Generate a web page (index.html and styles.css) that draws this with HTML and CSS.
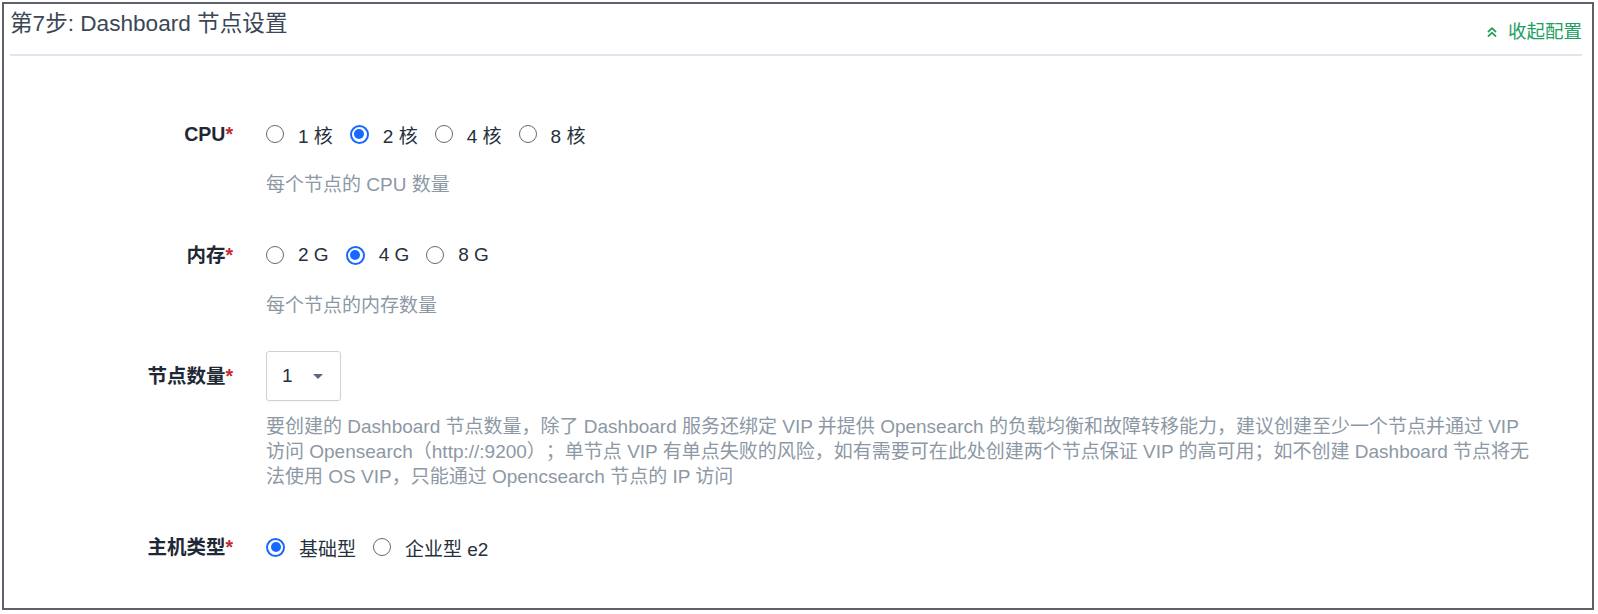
FILE: index.html
```html
<!DOCTYPE html>
<html lang="zh-CN">
<head>
<meta charset="utf-8">
<title>Dashboard 节点设置</title>
<link rel="stylesheet" href="styles.css">
</head>
<body>
<div class="panel">
  <div class="panel-header">
    <div class="panel-title">第7步: Dashboard 节点设置</div>
    <a class="collapse">
      <svg class="collapse-icon" width="12" height="12" viewBox="0 0 12 12"><path d="M2 6 L6 2.2 L10 6 M2 10.5 L6 6.7 L10 10.5" fill="none" stroke="currentColor" stroke-width="1.8"/></svg>
      <span>收起配置</span>
    </a>
  </div>
  <div class="form">
    <div class="form-item">
      <div class="form-label">CPU<span class="req">*</span></div>
      <div class="form-control">
        <div class="control-row">
          <label class="radio"><span class="radio-dot"></span><span>1 核</span></label>
          <label class="radio checked"><span class="radio-dot"></span><span>2 核</span></label>
          <label class="radio"><span class="radio-dot"></span><span>4 核</span></label>
          <label class="radio"><span class="radio-dot"></span><span>8 核</span></label>
        </div>
        <div class="help">每个节点的 CPU 数量</div>
      </div>
    </div>
    <div class="form-item">
      <div class="form-label">内存<span class="req">*</span></div>
      <div class="form-control">
        <div class="control-row">
          <label class="radio"><span class="radio-dot"></span><span>2 G</span></label>
          <label class="radio checked"><span class="radio-dot"></span><span>4 G</span></label>
          <label class="radio"><span class="radio-dot"></span><span>8 G</span></label>
        </div>
        <div class="help">每个节点的内存数量</div>
      </div>
    </div>
    <div class="form-item">
      <div class="form-label">节点数量<span class="req">*</span></div>
      <div class="form-control">
        <div class="control-row">
          <div class="select"><span class="select-value">1</span><span class="caret"></span></div>
        </div>
        <div class="help">要创建的 Dashboard 节点数量，除了 Dashboard 服务还绑定 VIP 并提供 Opensearch 的负载均衡和故障转移能力，建议创建至少一个节点并通过 VIP<br>访问 Opensearch（http://:9200）；单节点 VIP 有单点失败的风险，如有需要可在此处创建两个节点保证 VIP 的高可用；如不创建 Dashboard 节点将无<br>法使用 OS VIP，只能通过 Opencsearch 节点的 IP 访问</div>
      </div>
    </div>
    <div class="form-item">
      <div class="form-label">主机类型<span class="req">*</span></div>
      <div class="form-control">
        <div class="control-row">
          <label class="radio checked"><span class="radio-dot"></span><span>基础型</span></label>
          <label class="radio"><span class="radio-dot"></span><span>企业型 e2</span></label>
        </div>
      </div>
    </div>
  </div>
</div>
</body>
</html>
```

FILE: styles.css
```css
* { box-sizing: border-box; }
body {
  margin: 0;
  background: #fff;
  font-family: "Liberation Sans", "Noto Sans CJK SC", sans-serif;
  text-spacing-trim: space-all;
}
.panel {
  margin: 2px;
  width: 1592px;
  height: 608px;
  border: 2px solid #5d6169;
  background: #fff;
}
.panel-header {
  display: flex;
  justify-content: space-between;
  align-items: flex-start;
  margin: 0 10px 0 6px;
  height: 52px;
  border-bottom: 2px solid #e0e6ed;
}
.panel-title {
  font-size: 22.6px;
  line-height: 40px;
  color: #3b4756;
}
.collapse {
  display: flex;
  align-items: center;
  gap: 10px;
  margin-top: 8px;
  font-size: 18.5px;
  line-height: 40px;
  color: #22a062;
  height: 40px;
}
.collapse-icon { display: block; }
.form {
  padding-top: 53px;
}
.form-item {
  display: flex;
  margin-bottom: 33px;
}
.form-label {
  width: 229px;
  flex: none;
  text-align: right;
  font-size: 19.5px;
  font-weight: 700;
  line-height: 50px;
  color: #1f2935;
}
.req {
  color: #c5282c;
}
.form-control {
  margin-left: 33px;
  flex: 1;
}
.control-row {
  display: flex;
  align-items: center;
  gap: 17px;
  height: 50px;
}
.radio {
  display: flex;
  align-items: center;
  gap: 14px;
  font-size: 19px;
  color: #26303c;
}
.radio-dot {
  width: 18px;
  height: 18px;
  border-radius: 50%;
  border: 1.5px solid #666a70;
  display: flex;
  align-items: center;
  justify-content: center;
  flex: none;
}
.radio.checked .radio-dot {
  width: 19px;
  height: 19px;
  border: 2px solid #1668ff;
}
.radio.checked .radio-dot::after {
  content: "";
  width: 10px;
  height: 10px;
  border-radius: 50%;
  background: #1668ff;
}
.select {
  width: 75px;
  height: 50px;
  border: 1.5px solid #c9d3de;
  border-radius: 3px;
  display: flex;
  align-items: center;
  padding-left: 15px;
  gap: 20px;
  box-shadow: 0 1px 2px rgba(0,0,0,0.04);
}
.select-value {
  font-size: 19px;
  color: #26303c;
}
.caret {
  width: 0;
  height: 0;
  border-left: 5.5px solid transparent;
  border-right: 5.5px solid transparent;
  border-top: 5.5px solid #5e6977;
}
.help {
  margin-top: 13px;
  font-size: 19px;
  line-height: 25px;
  color: #8d98a5;
  white-space: nowrap;
}
```
